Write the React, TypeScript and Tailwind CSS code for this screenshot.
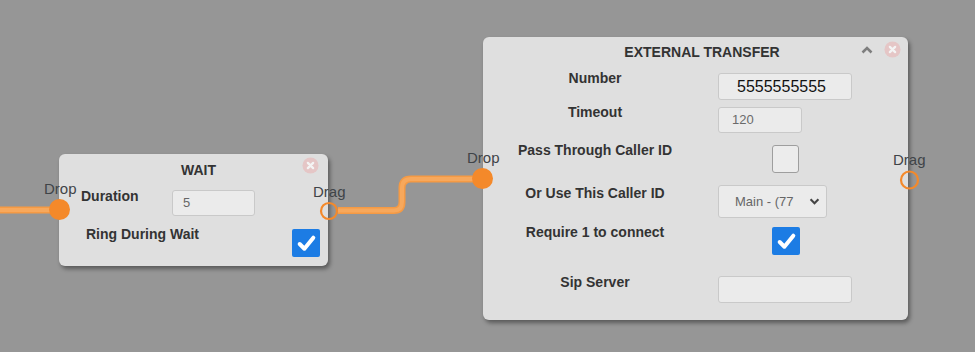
import React from "react";

const font = "font-['Liberation_Sans',Arial,sans-serif]";

function CloseDot({ className }: { className: string }) {
  return (
    <svg viewBox="0 0 18 18" className={`absolute w-[17px] h-[17px] ${className}`}>
      <circle cx="9" cy="9" r="8.5" fill="#e5c6c6" />
      <path d="M6.2 6.2 L11.8 11.8 M11.8 6.2 L6.2 11.8" stroke="#f4f4f4" strokeWidth="2.4" strokeLinecap="round" />
    </svg>
  );
}

function Checkbox({ checked }: { checked?: boolean }) {
  if (!checked) {
    return <div className="w-[27px] h-[28px] rounded-[3px] border-[1.5px] border-[#9e9e9e] bg-[#ececec]" />;
  }
  return (
    <div className="w-[28px] h-[28px] rounded-[2px] bg-[#1c7ce4] flex items-center justify-center">
      <svg viewBox="0 0 20 20" className="w-[21px] h-[21px]">
        <path d="M3.5 10.5 L8 15 L16.5 4.5" fill="none" stroke="#fff" strokeWidth="3.8" strokeLinecap="round" strokeLinejoin="round" />
      </svg>
    </div>
  );
}

function TextBox({ value, w, h, className = "" }: { value?: string; w: string; h: string; className?: string }) {
  return (
    <div className={`${w} ${h} rounded-[3px] border border-[#c9c9c9] bg-[#ebebeb] flex items-center ${className}`}>
      {value}
    </div>
  );
}

function WaitNode() {
  return (
    <div className="absolute left-[59px] top-[154px] w-[269px] h-[112px] rounded-[6px] bg-[#dfdfdf] shadow-[2px_3px_4px_rgba(0,0,0,0.4)] text-[#333]">
      <CloseDot className="left-[243px] top-[3px]" />
      <div className="mt-[8px] h-[16px] leading-[16px] text-center text-[14px] font-bold pl-[10px]">WAIT</div>
      <div className="mt-[10px] flex items-start">
        <div className="ml-[22px] w-[91px] leading-[16px] text-[14px] font-bold">Duration</div>
        <TextBox value="5" w="w-[83px]" h="h-[26px]" className="mt-[2px] pl-[10px] text-[13px] text-[#666]" />
      </div>
      <div className="mt-[10px] flex items-start">
        <div className="ml-[27px] leading-[16px] text-[14px] font-bold">Ring During Wait</div>
        <div className="ml-auto mr-[8px] mt-[3px]">
          <Checkbox checked />
        </div>
      </div>
    </div>
  );
}

const labelCls = "w-[224px] text-center leading-[16px] text-[14px] font-bold";

function TransferNode() {
  return (
    <div className="absolute left-[483px] top-[37px] w-[425px] h-[283px] rounded-[6px] bg-[#dfdfdf] shadow-[2px_3px_4px_rgba(0,0,0,0.4)] text-[#333]">
      <svg viewBox="0 0 12 8" className="absolute left-[378px] top-[9px] w-[12px] h-[8px]">
        <path d="M1.5 6.5 L6 2 L10.5 6.5" fill="none" stroke="#7e7e7e" strokeWidth="2.6" />
      </svg>
      <CloseDot className="left-[401px] top-[4px]" />
      <div className="mt-[7px] h-[16px] leading-[16px] text-center text-[14px] font-bold pl-[13px]">EXTERNAL TRANSFER</div>

      <div className="mt-[10px] grid grid-cols-[224px_auto] gap-x-[11px] items-start">
        <div className={labelCls}>Number</div>
        <TextBox value="5555555555" w="w-[134px]" h="h-[27px]" className="mt-[3px] pl-[18px] text-[16px] text-[#111]" />
      </div>
      <div className="mt-[4px] grid grid-cols-[224px_auto] gap-x-[11px] items-start">
        <div className={labelCls}>Timeout</div>
        <TextBox value="120" w="w-[84px]" h="h-[26px]" className="mt-[3px] pl-[13px] text-[13px] text-[#6a6a6a]" />
      </div>
      <div className="mt-[9px] grid grid-cols-[224px_auto] gap-x-[11px] items-start">
        <div className={labelCls}>Pass Through Caller ID</div>
        <div className="mt-[3px] ml-[54px]">
          <Checkbox />
        </div>
      </div>
      <div className="mt-[12px] grid grid-cols-[224px_auto] gap-x-[11px] items-start">
        <div className={labelCls}>Or Use This Caller ID</div>
        <div className="w-[109px] h-[33px] rounded-[3px] border border-[#c9c9c9] bg-[#ebebeb] flex items-center pl-[16px] pr-[6px] text-[13px] text-[#666]">
          <span>Main - (77</span>
          <svg viewBox="0 0 12 8" className="ml-auto w-[11px] h-[7px]">
            <path d="M1.5 1.5 L6 6 L10.5 1.5" fill="none" stroke="#444" strokeWidth="2.4" />
          </svg>
        </div>
      </div>
      <div className="mt-[6px] grid grid-cols-[224px_auto] gap-x-[11px] items-start">
        <div className={labelCls}>Require 1 to connect</div>
        <div className="mt-[3px] ml-[54px]">
          <Checkbox checked />
        </div>
      </div>
      <div className="mt-[19px] grid grid-cols-[224px_auto] gap-x-[11px] items-start">
        <div className={labelCls}>Sip Server</div>
        <TextBox w="w-[134px]" h="h-[27px]" className="mt-[2px]" />
      </div>
    </div>
  );
}

export default function App() {
  return (
    <div className={`relative w-[975px] h-[352px] overflow-hidden bg-[#969696] ${font}`}>
      <WaitNode />
      <TransferNode />

      {/* connections and ports */}
      <svg className="absolute inset-0 pointer-events-none" width="975" height="352">
        <path d="M0 210 H59" stroke="#f49a45" strokeWidth="7" fill="none" />
        <path d="M0 210 H59" stroke="#f7a85c" strokeWidth="4" fill="none" />
        <path d="M338 210.5 H394 Q402 210.5 402 202 V188 Q402 179 411 179 H483" stroke="#f49a45" strokeWidth="7" fill="none" />
        <path d="M338 210.5 H394 Q402 210.5 402 202 V188 Q402 179 411 179 H483" stroke="#f7a85c" strokeWidth="4" fill="none" />
        <circle cx="59.5" cy="209.5" r="10.5" fill="#f4892a" />
        <circle cx="482.5" cy="178.5" r="10.5" fill="#f4892a" />
        <circle cx="329" cy="211" r="8" fill="none" stroke="#f4892a" strokeWidth="2.2" />
        <circle cx="909.5" cy="180" r="8.5" fill="none" stroke="#f4892a" strokeWidth="2.2" />
      </svg>

      <span className="absolute left-[44px] top-[180px] leading-[17px] text-[15px] text-[#3f4448]">Drop</span>
      <span className="absolute left-[313px] top-[183px] leading-[17px] text-[15px] text-[#3f4448]">Drag</span>
      <span className="absolute left-[467px] top-[149px] leading-[17px] text-[15px] text-[#3f4448]">Drop</span>
      <span className="absolute left-[893px] top-[151px] leading-[17px] text-[15px] text-[#3f4448]">Drag</span>
    </div>
  );
}
